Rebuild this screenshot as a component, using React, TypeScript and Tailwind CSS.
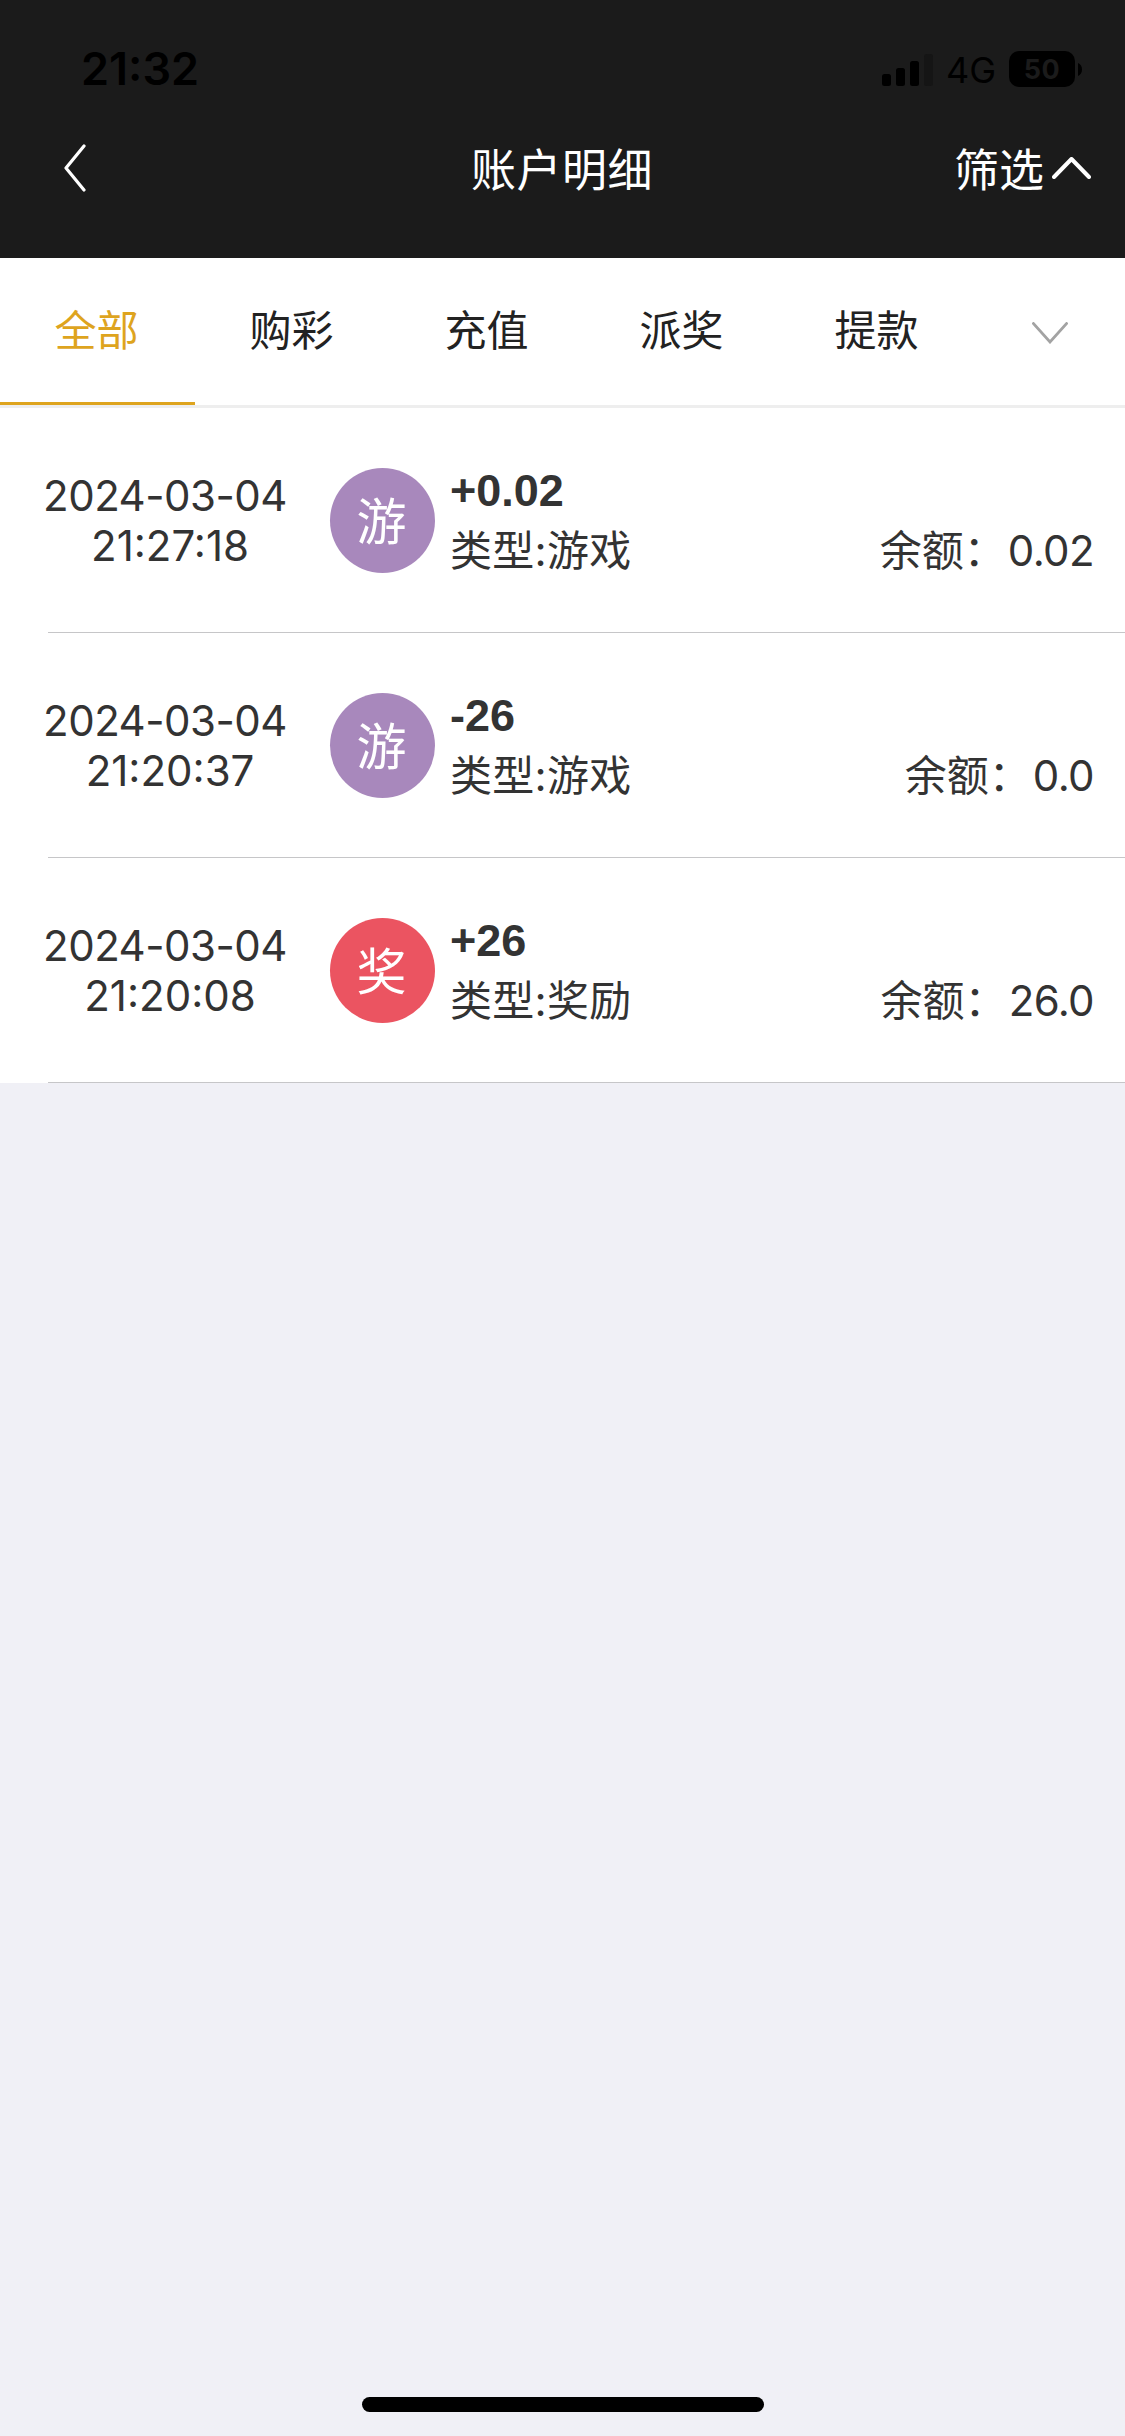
interface Transaction {
  date: string;
  time: string;
  badge: string;
  badgeClass: string;
  amount: string;
  type: string;
  balance: string;
}

const TABS = ["全部", "购彩", "充值", "派奖", "提款"];

const TRANSACTIONS: Transaction[] = [
  {
    date: "2024-03-04",
    time: "21:27:18",
    badge: "游",
    badgeClass: "bg-[#a888bc]",
    amount: "+0.02",
    type: "游戏",
    balance: "0.02",
  },
  {
    date: "2024-03-04",
    time: "21:20:37",
    badge: "游",
    badgeClass: "bg-[#a888bc]",
    amount: "-26",
    type: "游戏",
    balance: "0.0",
  },
  {
    date: "2024-03-04",
    time: "21:20:08",
    badge: "奖",
    badgeClass: "bg-[#eb5461]",
    amount: "+26",
    type: "奖励",
    balance: "26.0",
  },
];

function StatusBar() {
  return (
    <div className="flex h-[138px] items-start justify-between pt-[50px] pr-[43px] pl-[81px] text-black">
      <span className="text-[45px] leading-[38px] font-semibold">21:32</span>
      <div className="flex h-[38px] items-center">
        <svg width="51" height="32" viewBox="0 0 51 32" className="mt-[1px]">
          <rect x="0" y="20" width="9" height="12" rx="2.5" />
          <rect x="14" y="14" width="9" height="18" rx="2.5" />
          <rect x="28" y="7" width="9" height="25" rx="2.5" />
          <rect x="42" y="0" width="9" height="32" rx="2.5" fill="#151515" />
        </svg>
        <span className="ml-[13px] w-[63px] pt-0.5 text-[36px] leading-[38px]">
          4G
        </span>
        <span className="flex h-9 w-[66px] items-center justify-center rounded-[10px] bg-black pt-0.5 text-[27px] font-bold tracking-[0.5px] text-[#1b1b1b]">
          50
        </span>
        <svg width="4" height="13" viewBox="0 0 4 13" className="ml-[3px]">
          <path d="M0 0C2.5 1 4 3.5 4 6.5S2.5 12 0 13Z" />
        </svg>
      </div>
    </div>
  );
}

function Header() {
  return (
    <header className="h-[258px] bg-[#1b1b1b]">
      <StatusBar />
      <div className="grid h-[60px] grid-cols-3 items-center text-white">
        <svg
          width="22"
          height="48"
          viewBox="0 0 22 48"
          fill="none"
          stroke="currentColor"
          strokeWidth="3.2"
          strokeLinecap="round"
          strokeLinejoin="round"
          className="ml-16">
          <path d="M20 2L2 24L20 46" />
        </svg>
        <h1 className="pr-px text-center font-['Noto_Sans_CJK_SC'] text-[45px] leading-[60px] tracking-[0.5px]">
          账户明细
        </h1>
        <button className="flex items-center justify-end pr-[34px] font-['Noto_Sans_CJK_SC'] text-[45px] leading-[60px]">
          筛选
          <svg
            width="39"
            height="22"
            viewBox="0 0 39 22"
            fill="none"
            stroke="currentColor"
            strokeWidth="4"
            strokeLinecap="round"
            strokeLinejoin="round"
            className="ml-2">
            <path d="M2 20L19.500 2L37 20" />
          </svg>
        </button>
      </div>
    </header>
  );
}

function TabBar() {
  return (
    <nav className="flex h-[150px] border-b-3 border-[#eeeeee] bg-white">
      {TABS.map((label, i) => (
        <button
          key={label}
          className={`w-[195px] border-b-3 pt-px pr-0.5 text-[42px] leading-[60px] ${
            i === 0 ?
              "border-[#dea41e] text-[#dea41e]"
            : "border-transparent text-[#222222]"
          }`}>
          {label}
        </button>
      ))}
      <div className="flex flex-1 items-center justify-center pt-0.5">
        <svg
          width="36"
          height="22"
          viewBox="0 0 36 22"
          fill="none"
          stroke="#a3a3a3"
          strokeWidth="2.800">
          <path d="M0.500 0.500L18 20L35.500 0.500" />
        </svg>
      </div>
    </nav>
  );
}

function TransactionRow({ item }: { item: Transaction }) {
  return (
    <li className="bg-white text-[#333333]">
      <div className="flex h-56 pt-15 pr-[31px]">
        <div className="w-[330px] pt-[3px] text-center text-[42px] leading-[50px]">
          <p className="tracking-[-0.5px]">{item.date}</p>
          <p className="pl-2.5">{item.time}</p>
        </div>
        <span
          className={`flex size-[105px] items-center justify-center rounded-full pt-[3px] pr-0.5 text-[50px] text-white ${item.badgeClass}`}>
          {item.badge}
        </span>
        <div className="ml-[15px] flex-1">
          <p className="font-['Liberation_Sans'] text-[45px] leading-[46px] font-bold">
            {item.amount}
          </p>
          <div className="flex justify-between pt-0.5 text-[42px] leading-[70px]">
            <span className="tracking-[0.3px]">类型:{item.type}</span>
            <span>
              余额：
              <span className="ml-0.5 tracking-[-0.6px]">{item.balance}</span>
            </span>
          </div>
        </div>
      </div>
      <div className="ml-12 h-px bg-[#c6c6c8]" />
    </li>
  );
}

export default function App() {
  return (
    <div className="flex h-[2436px] w-[1125px] flex-col overflow-hidden bg-[#f0f0f6] font-['Inter','Noto_Sans_CJK_SC',sans-serif]">
      <Header />
      <TabBar />
      <ul>
        {TRANSACTIONS.map((item) => (
          <TransactionRow key={item.time} item={item} />
        ))}
      </ul>
      <div className="mt-auto mb-6 ml-[362px] h-[15px] w-[402px] rounded-full bg-black" />
    </div>
  );
}
